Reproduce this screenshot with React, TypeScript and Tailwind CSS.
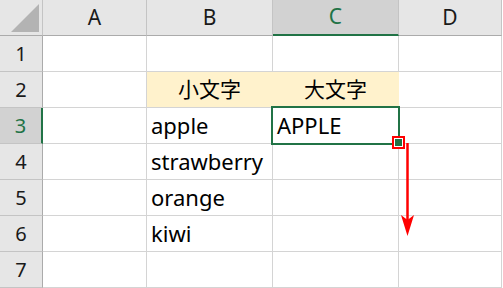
const cols = ["A", "B", "C", "D"];

const cells: Record<string, string> = {
  B2: "小文字",
  C2: "大文字",
  B3: "apple",
  C3: "APPLE",
  B4: "strawberry",
  B5: "orange",
  B6: "kiwi",
};

const font = { fontFamily: '"Noto Sans", "Noto Sans CJK JP", sans-serif' };

function ColHeader({ label }: { label: string }) {
  const active = label === "C";
  return (
    <div
      className={`flex items-center justify-center border-r border-r-[#c4c4c4] ${
        active
          ? "bg-[#d2d2d2] border-b-2 border-b-[#217346] text-[#217346]"
          : "bg-[#e6e6e6] border-b border-b-[#ababab] text-[#1a1a1a]"
      } text-[21px]`}
    >
      {label}
    </div>
  );
}

function RowHeader({ n }: { n: number }) {
  const active = n === 3;
  return (
    <div
      className={`flex items-center justify-center border-b border-b-[#c4c4c4] text-[20px] ${
        active
          ? "bg-[#d2d2d2] border-r-2 border-r-[#217346] text-[#217346]"
          : "bg-[#e6e6e6] border-r border-r-[#ababab] text-[#1a1a1a]"
      }`}
    >
      {n}
    </div>
  );
}

function Cell({ id }: { id: string }) {
  const text = cells[id];
  const header = id === "B2" || id === "C2";
  return (
    <div
      className={`flex items-center border-b border-b-[#d4d4d4] border-r text-black ${
        header
          ? "bg-[#fff2cc] border-r-[#fff2cc] justify-center text-[21px]"
          : "bg-white border-r-[#d4d4d4] pl-[4px] text-[22px]"
      }`}
    >
      {text}
    </div>
  );
}

export default function App() {
  return (
    <div className="relative w-[503px] h-[288px] overflow-hidden bg-white" style={font}>
      <div className="grid grid-cols-[43px_104px_126px_126px_103px] grid-rows-[36px_repeat(7,36px)]">
        {/* corner */}
        <div className="flex items-end justify-end bg-[#e6e6e6] border-r border-r-[#c4c4c4] border-b border-b-[#ababab] pr-[3px] pb-[3px]">
          <svg width="28" height="28" viewBox="0 0 28 28">
            <polygon points="0,28 28,28 28,0" fill="#b3b3b3" />
          </svg>
        </div>
        {cols.map((c) => (
          <ColHeader key={c} label={c} />
        ))}
        {[1, 2, 3, 4, 5, 6, 7].map((r) => (
          <div key={r} className="contents">
            <RowHeader n={r} />
            {cols.map((c) => (
              <Cell key={c + r} id={c + r} />
            ))}
          </div>
        ))}
      </div>

      {/* active cell outline */}
      <div className="absolute left-[271px] top-[106px] w-[129px] h-[39px] border-2 border-[#217346]" />

      {/* fill handle, highlighted */}
      <div className="absolute left-[392px] top-[136px] w-[13px] h-[13px] border-2 border-[#ff0000] bg-white p-px">
        <div className="w-full h-full bg-[#217346]" />
      </div>

      {/* drag arrow */}
      <svg className="absolute left-[400px] top-[140px]" width="16" height="100" viewBox="0 0 16 100">
        <line x1="7.5" y1="3" x2="7.5" y2="82" stroke="#ff0000" strokeWidth="2.5" />
        <polygon points="1,75 7.5,80 14,75 7.5,96" fill="#ff0000" />
      </svg>
    </div>
  );
}
